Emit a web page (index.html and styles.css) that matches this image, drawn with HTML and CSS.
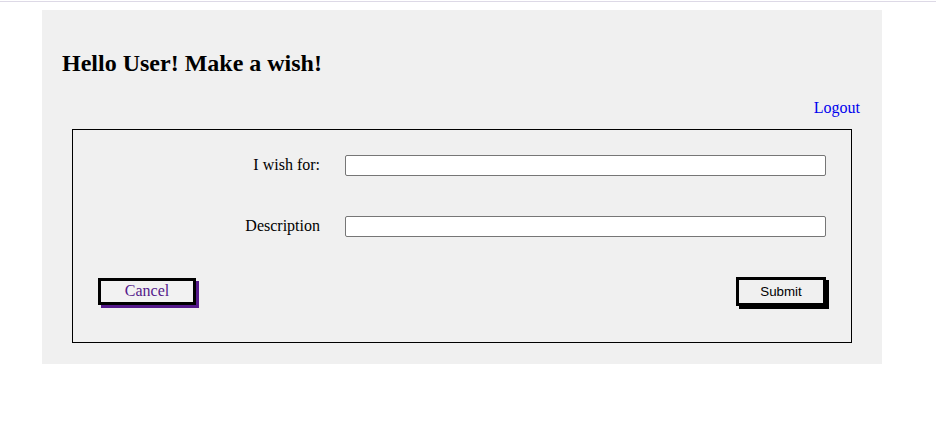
FILE: index.html
```html
<!DOCTYPE html>
<html lang="en">
<head>
<meta charset="utf-8">
<title>Make a wish</title>
<link rel="stylesheet" href="styles.css">
</head>
<body>
<div class="topline"></div>
<div class="panel">
  <h2 class="title">Hello User! Make a wish!</h2>
  <div class="logout-row"><a class="logout" href="#">Logout</a></div>
  <form class="wish-box">
    <div class="fields">
      <label class="label" for="wish">I wish for:</label>
      <input class="field" id="wish" type="text">
      <label class="label" for="desc">Description</label>
      <input class="field" id="desc" type="text">
    </div>
    <div class="actions">
      <a class="cancel" href="#">Cancel</a>
      <button class="submit" type="button">Submit</button>
    </div>
  </form>
</div>
</body>
</html>
```
FILE: styles.css
```css
html, body {
  margin: 0;
  padding: 0;
  background: #ffffff;
}
body {
  font-family: "Liberation Serif", "Times New Roman", serif;
  font-size: 16px;
  color: #000;
}
.topline {
  margin-top: 1px;
  height: 1px;
  background: #ddd9e6;
}
.panel {
  margin: 8px 0 0 42px;
  width: 840px;
  box-sizing: border-box;
  padding: 20px 20px 21px;
  background: #f0f0f0;
}
.title {
  margin: 20px 0 21px;
  font-size: 24px;
  font-weight: bold;
  line-height: 27.6px;
}
.logout-row {
  text-align: right;
  line-height: 18px;
  padding-right: 2px;
}
.logout {
  color: #0000ee;
  text-decoration: none;
}
.wish-box {
  margin: 12px 10px 0;
  border: 1px solid #000;
  padding: 25px 25px 36px;
}
.fields {
  display: grid;
  grid-template-columns: 222px 1fr;
  column-gap: 25px;
  row-gap: 40px;
  align-items: center;
}
.label {
  text-align: right;
  line-height: 18px;
}
.field {
  display: block;
  width: 100%;
  height: 21px;
  box-sizing: border-box;
  margin: 0;
  padding: 1px 2px;
  border: 1px solid #767676;
  border-radius: 2px;
  background: #fff;
  font: 13.33px "Liberation Sans", Arial, sans-serif;
}
.actions {
  margin-top: 40px;
  display: flex;
  justify-content: space-between;
  align-items: center;
}
.cancel {
  display: flex;
  align-items: center;
  justify-content: center;
  width: 98px;
  height: 27px;
  box-sizing: border-box;
  border: 3px solid #000;
  box-shadow: 3px 3px 0 #551a8b;
  color: #551a8b;
  text-decoration: none;
  background: #f2f2f2;
  line-height: 18px;
}
.submit {
  width: 90px;
  height: 29px;
  box-sizing: border-box;
  margin: 0;
  padding: 0;
  border: 3px solid #000;
  box-shadow: 3px 3px 0 #000;
  background: #f0f0f0;
  color: #000;
  font: 13.33px "Liberation Sans", Arial, sans-serif;
}
```
